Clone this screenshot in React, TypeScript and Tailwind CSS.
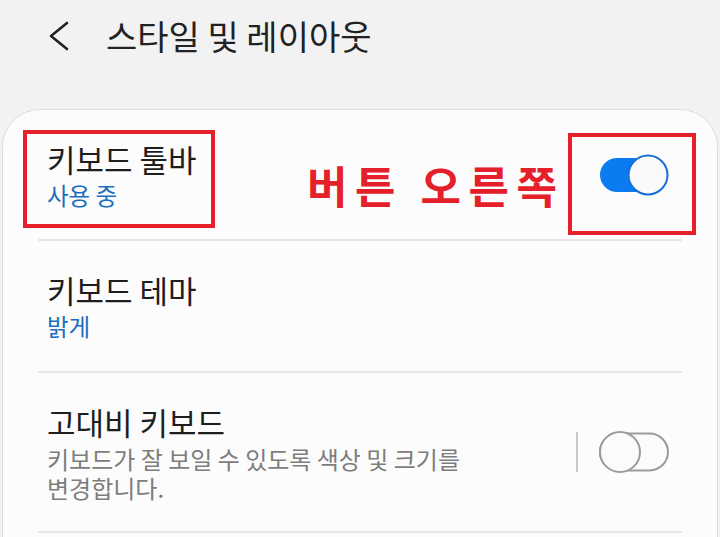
const font = { fontFamily: '"Noto Sans CJK KR", "Noto Sans", sans-serif' }

function ToggleOn() {
  return (
    <svg width="72" height="44" viewBox="0 0 72 44" className="block">
      <rect x="2" y="5" width="58" height="34" rx="17" fill="#0b7cf0" />
      <circle cx="50" cy="22" r="19.5" fill="#fafafa" stroke="#1670d4" strokeWidth="2" />
    </svg>
  )
}

function ToggleOff() {
  return (
    <svg width="72" height="44" viewBox="0 0 72 44" className="block">
      <rect x="2" y="3.5" width="68" height="37" rx="18.5" fill="#fbfbfb" stroke="#9b9b9b" strokeWidth="2" />
      <circle cx="22" cy="22" r="20" fill="#fbfbfb" stroke="#9b9b9b" strokeWidth="2" />
    </svg>
  )
}

export default function App() {
  return (
    <div className="w-[720px] h-[537px] overflow-hidden bg-[#f2f2f2] text-[#1e1e1e]" style={font}>
      <div className="h-[109px] flex items-start pt-[14px]">
        <div className="flex items-center h-[44px]">
          <svg width="24" height="32" viewBox="0 0 24 32" className="ml-[46px] text-[#222]">
            <path d="M21 3 L5 16 L21 29" fill="none" stroke="currentColor" strokeWidth="2.6" strokeLinecap="round" strokeLinejoin="round" />
          </svg>
          <h1 className="ml-[36px] text-[34px] leading-[44px] text-[#222]">스타일 및 레이아웃</h1>
        </div>
      </div>

      <div className="relative mx-[2px] h-[440px] bg-[#fcfcfc] border border-[#dcdcdc] rounded-t-[38px] px-[35px]">
        <div className="h-[131px] flex items-center justify-between border-b-2 border-[#e6e6e6] pl-[9px] pr-[12px]">
          <div className="flex flex-col">
            <span className="text-[31px] leading-[38px]">키보드 툴바</span>
            <span className="text-[23.5px] leading-[30px] text-[#1a6fc0] mt-[2px]">사용 중</span>
          </div>
          <ToggleOn />
        </div>

        <div className="h-[132px] flex items-center border-b-2 border-[#e6e6e6] pl-[9px]">
          <div className="flex flex-col">
            <span className="text-[31px] leading-[38px]">키보드 테마</span>
            <span className="text-[23.5px] leading-[30px] text-[#1a6fc0] mt-[2px]">밝게</span>
          </div>
        </div>

        <div className="h-[160px] flex items-center justify-between border-b-2 border-[#e6e6e6] pl-[9px] pr-[12px]">
          <div className="flex flex-col">
            <span className="text-[31px] leading-[38px]">고대비 키보드</span>
            <span className="text-[24px] leading-[29px] text-[#7d7d7d] mt-[3px]">
              키보드가 잘 보일 수 있도록 색상 및 크기를
              <br />
              변경합니다.
            </span>
          </div>
          <div className="flex items-center gap-[20px]">
            <div className="w-[2px] h-[40px] bg-[#c8c8c8]" />
            <ToggleOff />
          </div>
        </div>

        {/* annotations */}
        <div className="absolute left-[20px] top-[20px] w-[192px] h-[98px] border-4 border-[#e5202a]" />
        <div className="absolute left-[565px] top-[23px] w-[128px] h-[102px] border-4 border-[#e5202a]" />
        <span className="absolute left-[304px] top-[46px] text-[44px] leading-[58px] font-bold tracking-[7.5px] text-[#e5202a]">
          버튼 오른쪽
        </span>
      </div>
    </div>
  )
}
